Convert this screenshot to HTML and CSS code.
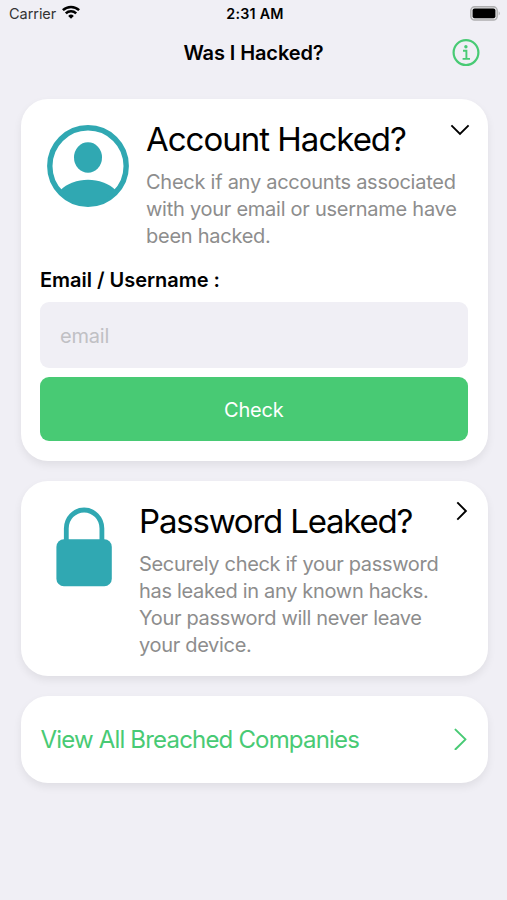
FILE: index.html
```html
<!DOCTYPE html>
<html lang="en">
<head>
  <meta charset="UTF-8" />
  <meta name="viewport" content="width=device-width, initial-scale=1.0"/>
  <title>Was I Hacked?</title>
  <link rel="stylesheet" href="styles.css">
</head>
<body>

  <!-- Status bar -->
  <div class="status-bar">
    <div class="carrier">
      <span class="carrier-name">Carrier</span>
      <svg class="wifi" width="18" height="14" viewBox="0 0 18 14" fill="none" stroke="#000" stroke-width="2.5">
        <path d="M0.9 5.2a11.6 11.6 0 0 1 16.2 0"/>
        <path d="M3.8 8.3a7.5 7.5 0 0 1 10.4 0"/>
        <path d="M9 13.7L6.2 10.9a4 4 0 0 1 5.6 0z" fill="#000" stroke="none"/>
      </svg>
    </div>
    <span class="time">2:31 AM</span>
    <svg class="battery" width="31" height="15" viewBox="0 0 31 15">
      <rect x="0.8" y="0.8" width="26.4" height="13.2" rx="3.8" fill="#e4e4e7" stroke="#aeaeb0" stroke-width="1.4"/>
      <rect x="2.6" y="2.6" width="22.8" height="9.6" rx="2" fill="#000"/>
      <path d="M28.7 5.2q2.2 2.2 0 4.4z" fill="#aeaeb0"/>
    </svg>
  </div>

  <header class="nav-bar">
    <h1>Was I Hacked?</h1>
    <svg class="info" width="28" height="28" viewBox="0 0 28 28" fill="none" stroke="#48ca74">
      <circle cx="14" cy="13.6" r="12.4" stroke-width="2.2"/>
      <circle cx="13.9" cy="7.8" r="1.7" fill="#48ca74" stroke="none"/>
      <path d="M11 11.8h3.4v7.9M10.6 19.9h7.4" stroke-width="1.9"/>
    </svg>
  </header>

  <main class="cards">

    <!-- Account check -->
    <section class="card account">
      <div class="card-top">
        <svg class="person" width="82" height="82" viewBox="0 0 82 82">
          <circle cx="41" cy="41" r="38.2" fill="none" stroke="#30a8b2" stroke-width="5.4"/>
          <ellipse cx="41" cy="32.5" rx="14" ry="15.3" fill="#30a8b2"/>
          <path d="M13 65.5C27 51 55 51 69 65.5A38.5 38.5 0 0 1 13 65.5z" fill="#30a8b2"/>
        </svg>
        <div class="card-text">
          <h2>Account Hacked?</h2>
          <p>Check if any accounts associated<br>with your email or username have<br>been hacked.</p>
        </div>
        <svg class="chevron down" width="20" height="12" viewBox="0 0 20 12" fill="none" stroke="#000" stroke-width="1.9">
          <path d="M1.4 1.3L10 9.9l8.6-8.6"/>
        </svg>
      </div>
      <label for="email">Email / Username :</label>
      <input type="text" id="email" placeholder="email">
      <button>Check</button>
    </section>

    <!-- Password check -->
    <section class="card password">
      <div class="card-top">
        <svg class="lock" width="56" height="80" viewBox="0 0 56 80">
          <path d="M10.3 36V21.5a17.8 18.5 0 0 1 35.6 0V36" fill="none" stroke="#30a8b2" stroke-width="4.8"/>
          <rect x="0.4" y="32.2" width="55.4" height="47" rx="7.5" fill="#30a8b2"/>
        </svg>
        <div class="card-text">
          <h2>Password Leaked?</h2>
          <p>Securely check if your password<br>has leaked in any known hacks.<br>Your password will never leave<br>your device.</p>
        </div>
        <svg class="chevron right" width="12" height="20" viewBox="0 0 12 20" fill="none" stroke="#000" stroke-width="1.9">
          <path d="M1.3 1.4L9.9 10l-8.6 8.6"/>
        </svg>
      </div>
    </section>

    <!-- Link to the full list -->
    <a class="card companies">
      <span>View All Breached Companies</span>
      <svg width="14" height="22" viewBox="0 0 14 22" fill="none" stroke="#48ca74" stroke-width="2" stroke-linecap="round" stroke-linejoin="round">
        <path d="M1.5 1.6L11.5 11.4 1.5 21.2"/>
      </svg>
    </a>

  </main>

</body>
</html>
```

FILE: styles.css
```css
* {
  box-sizing: border-box;
}

body {
  margin: 0;
  height: 100vh;
  overflow: hidden;
  background: #f0eff5;
  color: #000;
  font-family: Inter, 'Liberation Sans', sans-serif;
}

h1, h2, p {
  margin: 0;
}

svg {
  display: block;
  flex: none;
}

.status-bar {
  display: grid;
  grid-template-columns: 1fr auto 1fr;
  align-items: center;
  height: 27px;
  padding: 0 6px 0 9px;
  font-size: 14.5px;
  white-space: nowrap;
}

.carrier {
  display: flex;
  align-items: center;
  gap: 6px;
  color: #333;
}

.carrier-name {
  letter-spacing: -0.05px;
}

.wifi {
  margin-top: -3px;
}

.time {
  font-weight: 600;
  font-size: 14.3px;
  letter-spacing: 0.25px;
}

.battery {
  justify-self: end;
}

.nav-bar {
  display: grid;
  grid-template-columns: 1fr auto 1fr;
  align-items: center;
  height: 51px;
  padding: 0 27px;
}

.nav-bar h1 {
  grid-column: 2;
  font-size: 20px;
  font-weight: 600;
  letter-spacing: -0.1px;
  white-space: nowrap;
}

.info {
  justify-self: end;
}

.cards {
  display: flex;
  flex-direction: column;
  gap: 20px;
  padding: 20.5px 19.5px 0 20.5px;
}

.card {
  background: #fff;
  border-radius: 27px;
  box-shadow: 0 4px 9px rgba(0, 0, 0, 0.07);
}

.card-top {
  display: flex;
  align-items: flex-start;
}

.card-text {
  flex: 1;
  min-width: 0;
  white-space: nowrap;
}

.card-text h2 {
  font-size: 33px;
  line-height: 42px;
  font-weight: 400;
  letter-spacing: -1px;
}

.card-text p {
  margin-top: 9px;
  font-size: 20px;
  line-height: 27px;
  letter-spacing: -0.26px;
  color: #8d8d8d;
}

.account {
  height: 362px;
  padding: 19.5px 20px 20px 19.5px;
}

.person {
  margin: 7px 17px 0 7px;
}

.down {
  margin: 6px -2px 0 0;
}

.account label {
  display: block;
  margin-top: 17px;
  font-size: 20px;
  line-height: 26px;
  font-weight: 600;
  letter-spacing: -0.03px;
}

.account input {
  display: block;
  width: 100%;
  height: 66px;
  margin-top: 9px;
  padding: 1px 20px 0;
  border: none;
  border-radius: 9px;
  background: #f0eff5;
  font: inherit;
  font-size: 20px;
  letter-spacing: -0.2px;
}

.account input::placeholder {
  color: #c0c0c4;
}

.account button {
  display: block;
  width: 100%;
  height: 64px;
  margin-top: 9px;
  padding: 2px 0 0;
  border: none;
  border-radius: 9px;
  background: #48ca74;
  color: #fff;
  font: inherit;
  font-size: 20px;
  letter-spacing: -0.2px;
}

.password {
  height: 195px;
  padding: 19.5px 20px 0 19.5px;
}

.password h2 {
  letter-spacing: -1.2px;
}

.password p {
  letter-spacing: -0.32px;
}

.lock {
  margin: 7px 27px 0 16px;
}

.right {
  margin-top: 1px;
}

.companies {
  display: flex;
  align-items: center;
  justify-content: space-between;
  height: 87px;
  padding: 0 20px;
  color: #48ca74;
  font-size: 24px;
  letter-spacing: -0.82px;
}
```
